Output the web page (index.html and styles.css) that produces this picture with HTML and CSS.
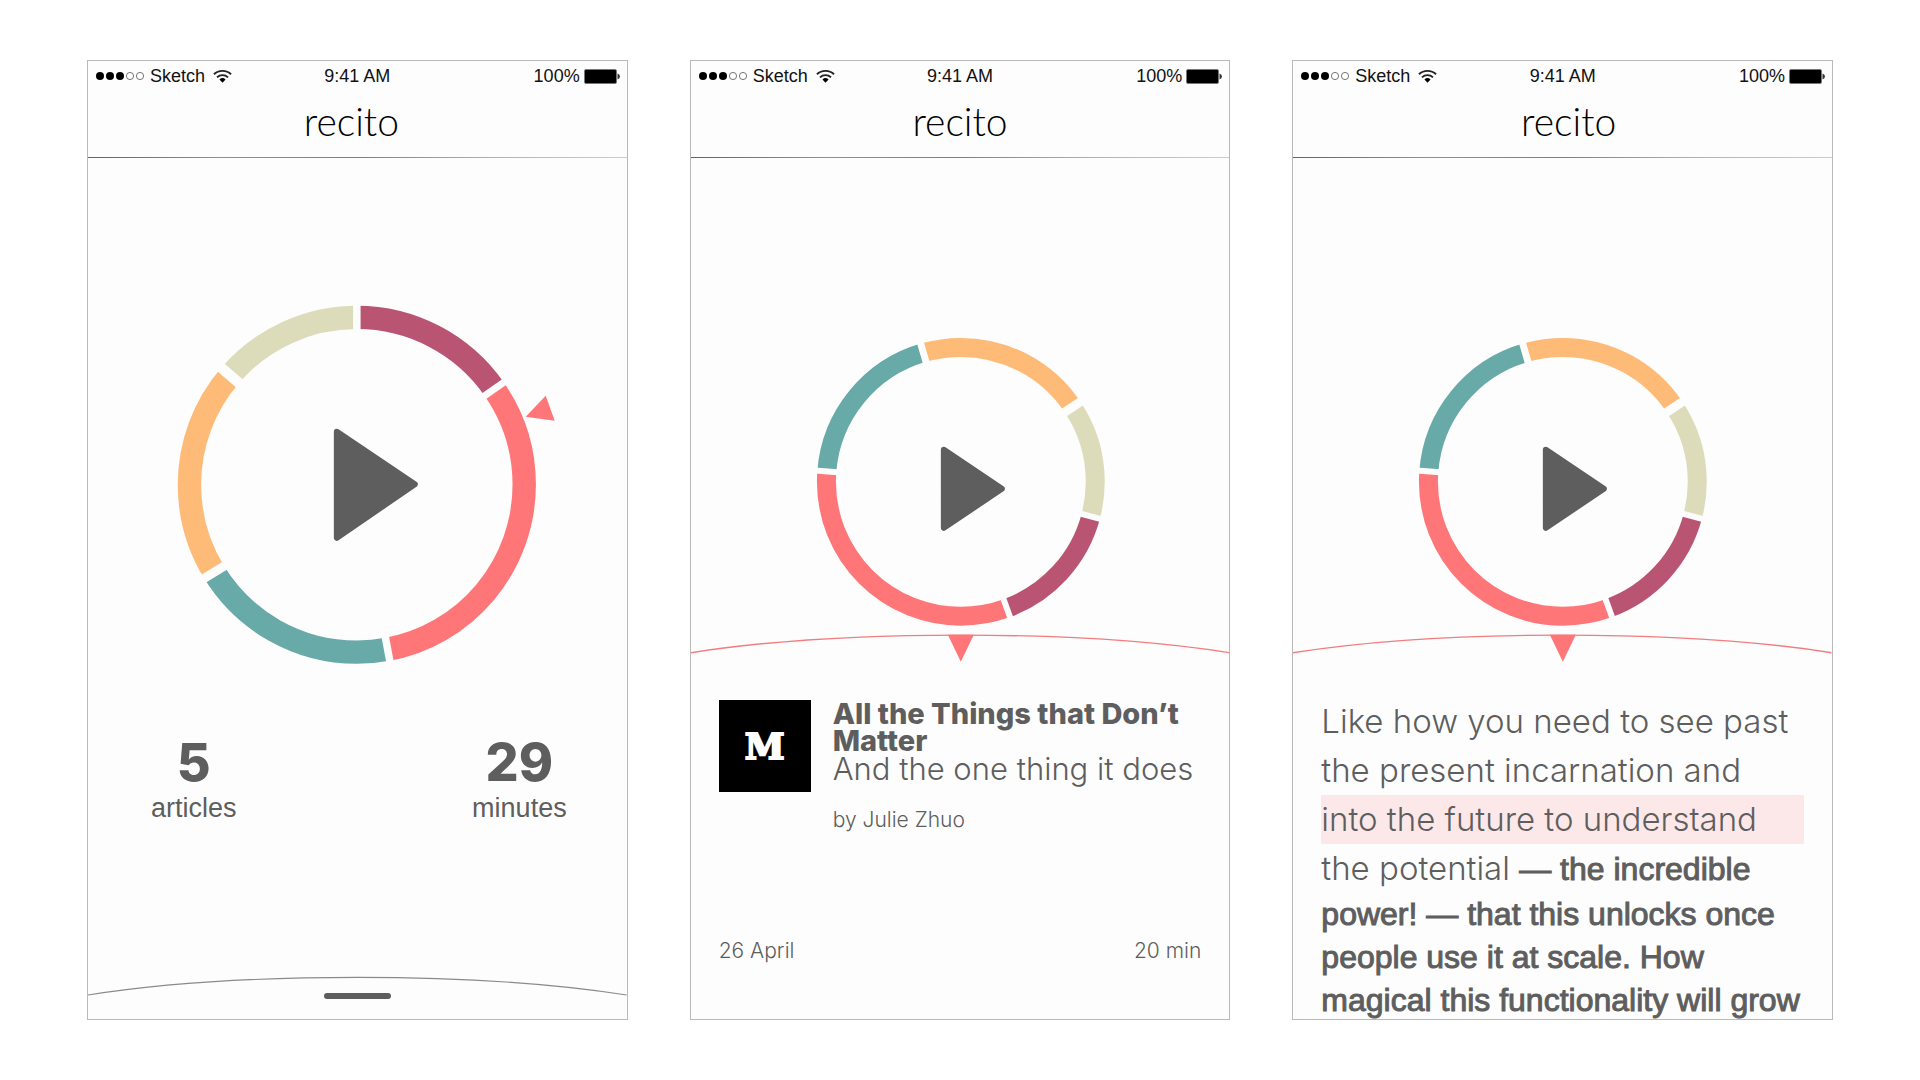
FILE: index.html
```html
<!DOCTYPE html>
<html lang="en">
<head>
<meta charset="utf-8">
<meta name="viewport" content="width=device-width, initial-scale=1">
<title>recito</title>
<link rel="stylesheet" href="styles.css">
</head>
<body>
<svg class="defs" aria-hidden="true">
  <symbol id="signal" viewBox="0 0 50 10">
    <g fill="#000"><circle cx="5" cy="5" r="4"/><circle cx="15" cy="5" r="4"/><circle cx="25" cy="5" r="4"/></g>
    <g fill="none" stroke="#555" stroke-width="0.8"><circle cx="35" cy="5" r="3.6"/><circle cx="45" cy="5" r="3.6"/></g>
  </symbol>
  <symbol id="wifi" viewBox="0 0 20 14">
    <g fill="none" stroke="#222" stroke-width="2"><path d="M1 5.2A13 13 0 0 1 19 5.2"/><path d="M4.2 8.4A8.4 8.4 0 0 1 15.8 8.4"/></g>
    <path d="M6.8 10.6A4.6 4.6 0 0 1 13.2 10.6L10 14Z" fill="#000"/>
  </symbol>
  <symbol id="battery" viewBox="0 0 36 15">
    <rect x="0.5" y="0.5" width="32" height="14" rx="1.5" fill="#000" stroke="#777"/>
    <path d="M33.5 4.5Q36 5.5 36 7.5T33.5 10.5Z" fill="#333"/>
  </symbol>
  <symbol id="dial" viewBox="0 0 539 505">
    <g fill="none" stroke-width="19" transform="rotate(-90 270 324)">
      <circle class="orange" cx="270" cy="324" r="134.5" pathLength="360" stroke-dasharray="72.4 287.6" stroke-dashoffset="16.2"/>
      <circle class="olive" cx="270" cy="324" r="134.5" pathLength="360" stroke-dasharray="48.7 311.3" stroke-dashoffset="-56.2"/>
      <circle class="plum" cx="270" cy="324" r="134.5" pathLength="360" stroke-dasharray="55.1 304.9" stroke-dashoffset="-104.9"/>
      <circle class="coral" cx="270" cy="324" r="134.5" pathLength="360" stroke-dasharray="114.4 245.6" stroke-dashoffset="-160"/>
      <circle class="teal" cx="270" cy="324" r="134.5" pathLength="360" stroke-dasharray="69.4 290.6" stroke-dashoffset="-274.4"/>
    </g>
    <g class="cut">
      <path stroke-width="7" d="M270 204V174" transform="rotate(343.8 270 324)"/>
      <path stroke-width="9" d="M270 204V174" transform="rotate(56.2 270 324)"/>
      <path stroke-width="6" d="M270 204V174" transform="rotate(104.9 270 324)"/>
      <path stroke-width="6" d="M270 204V174" transform="rotate(160 270 324)"/>
      <path stroke-width="6" d="M270 204V174" transform="rotate(274.4 270 324)"/>
    </g>
    <path class="play" d="M253 292L311 331L253 370Z"/>
    <path d="M0 495A386 62 0 0 1 539 495" fill="none" stroke="#f27c7e" stroke-width="1.4"/>
    <path d="M257 477H283L270 504Z" fill="#fe7678"/>
  </symbol>
</svg>

<main class="board">
  <section class="phone">
    <header class="top top-first">
      <div class="status">
        <span class="carrier"><svg class="signal"><use href="#signal"/></svg>Sketch<svg class="wifi"><use href="#wifi"/></svg></span>
        <span>9:41 AM</span>
        <span class="power">100%<svg class="battery"><use href="#battery"/></svg></span>
      </div>
      <h1 class="logo">recito</h1>
    </header>
    <button class="player" aria-label="Play all articles">
      <svg class="chart" viewBox="0 0 539 571">
        <g fill="none" stroke-width="23.4" transform="rotate(-90 269 327)">
          <circle class="plum" cx="269" cy="327" r="167.5" pathLength="360" stroke-dasharray="55.1 304.9"/>
          <circle class="coral" cx="269" cy="327" r="167.5" pathLength="360" stroke-dasharray="114.3 245.7" stroke-dashoffset="-55.1"/>
          <circle class="teal" cx="269" cy="327" r="167.5" pathLength="360" stroke-dasharray="69.1 290.9" stroke-dashoffset="-169.4"/>
          <circle class="orange" cx="269" cy="327" r="167.5" pathLength="360" stroke-dasharray="72.3 287.7" stroke-dashoffset="-238.5"/>
          <circle class="olive" cx="269" cy="327" r="167.5" pathLength="360" stroke-dasharray="49.2 310.8" stroke-dashoffset="-310.8"/>
        </g>
        <g class="cut">
          <path stroke-width="7.5" d="M269 177V142"/>
          <path stroke-width="7" d="M269 177V142" transform="rotate(55.1 269 327)"/>
          <path stroke-width="7.5" d="M269 177V142" transform="rotate(169.4 269 327)"/>
          <path stroke-width="9" d="M269 177V142" transform="rotate(238.5 269 327)"/>
          <path stroke-width="10.5" d="M269 177V142" transform="rotate(310.8 269 327)"/>
        </g>
        <path class="play" d="M249 274L327 326.5L249 380Z"/>
        <path d="M438 259L458 238L467 263Z" fill="#fe7678"/>
      </svg>
    </button>
    <dl class="stats">
      <div class="stat"><dd>5</dd><dt>articles</dt></div>
      <div class="stat"><dd>29</dd><dt>minutes</dt></div>
    </dl>
    <button class="drawer" aria-label="Open article list">
      <svg class="edge" viewBox="0 0 539 20"><path d="M0 19A386 62 0 0 1 539 19" fill="none" stroke="#8a8a8a" stroke-width="1.2"/></svg>
      <span class="grip"></span>
    </button>
  </section>

  <section class="phone">
    <header class="top">
      <div class="status">
        <span class="carrier"><svg class="signal"><use href="#signal"/></svg>Sketch<svg class="wifi"><use href="#wifi"/></svg></span>
        <span>9:41 AM</span>
        <span class="power">100%<svg class="battery"><use href="#battery"/></svg></span>
      </div>
      <h1 class="logo">recito</h1>
    </header>
    <button class="player" aria-label="Play article">
      <svg class="chart" viewBox="0 0 539 505"><use href="#dial"/></svg>
    </button>
    <article class="story">
      <div class="cover">M</div>
      <div class="summary">
        <h2 class="title">All the Things that Don’t Matter</h2>
        <p class="subtitle">And the one thing it does</p>
        <p class="byline">by Julie Zhuo</p>
      </div>
    </article>
    <footer class="meta"><span>26 April</span><span>20 min</span></footer>
  </section>

  <section class="phone">
    <header class="top top-last">
      <div class="status">
        <span class="carrier"><svg class="signal"><use href="#signal"/></svg>Sketch<svg class="wifi"><use href="#wifi"/></svg></span>
        <span>9:41 AM</span>
        <span class="power">100%<svg class="battery"><use href="#battery"/></svg></span>
      </div>
      <h1 class="logo">recito</h1>
    </header>
    <button class="player" aria-label="Play article">
      <svg class="chart" viewBox="0 0 539 505"><use href="#dial"/></svg>
    </button>
    <div class="reader">
      <p class="line">Like how you need to see past</p>
      <p class="line">the present incarnation and</p>
      <p class="line current">into the future to understand</p>
      <p class="line">the potential <strong>— the incredible</strong></p>
      <p class="next"><strong>power! — that this unlocks once<br>people use it at scale. How<br>magical this functionality will grow</strong></p>
    </div>
  </section>
</main>
</body>
</html>
```
FILE: styles.css
```css
* {
  box-sizing: border-box;
}

body {
  margin: 0;
  background: #fff;
  color: #5e5e5e;
  font-family: Inter, "Liberation Sans", sans-serif;
}

h1, h2, p, dl, dd {
  margin: 0;
}

button {
  display: block;
  width: 100%;
  padding: 0;
  border: 0;
  background: none;
  cursor: pointer;
}

.defs {
  display: none;
}

.board {
  display: grid;
  grid-template-columns: repeat(3, 1fr);
  gap: 62px;
  min-height: 100vh;
  padding: 60px 87px;
}

.phone {
  display: flex;
  flex-direction: column;
  overflow: hidden;
  border: 1px solid #b9b9b9;
  background: #fdfdfd;
}

/* header */

.top {
  height: 97px;
  border-bottom: 1px solid;
  border-image: linear-gradient(90deg, #a8405f, #dc6f72 25%, #4f9291 50%, #eaa658 75%, #d3d2a0) 1;
}

.status {
  display: grid;
  grid-template-columns: 1fr auto 1fr;
  align-items: center;
  height: 30px;
  padding: 0 7px;
  color: #111;
  font: 18px/20px "Liberation Sans", Arial, sans-serif;
}

.carrier, .power {
  display: flex;
  align-items: center;
}

.power {
  justify-content: flex-end;
  gap: 4px;
}

.signal {
  width: 50px;
  height: 10px;
  margin-right: 5px;
}

.wifi {
  width: 19px;
  height: 14px;
  margin-left: 8px;
}

.battery {
  width: 36px;
  height: 15px;
}

.logo {
  color: #000;
  font: 300 39px/44px Lato, sans-serif;
  padding-top: 8px;
  text-align: center;
}

.top-first .logo {
  padding-right: 12px;
}

.top-last .logo {
  padding-left: 12px;
}

/* player */

.chart {
  display: block;
  width: 100%;
}

.plum { stroke: #b95573; }
.coral { stroke: #fe7678; }
.teal { stroke: #67aaa8; }
.orange { stroke: #febb78; }
.olive { stroke: #dddcba; }

.cut {
  stroke: #fdfdfd;
}

.play {
  fill: #5e5e5e;
  stroke: #5e5e5e;
  stroke-width: 6;
  stroke-linejoin: round;
}

.stats {
  display: flex;
  justify-content: space-between;
  padding: 4px 60px 0 63px;
}

.stat {
  display: flex;
  flex-direction: column;
  align-items: center;
}

.stat dd {
  font-size: 52px;
  font-weight: 800;
  line-height: 60px;
}

.stat dt {
  font: 27px/30px "Liberation Sans", Arial, sans-serif;
}

.drawer {
  margin-top: auto;
  padding-bottom: 20px;
}

.edge {
  display: block;
  width: 100%;
}

.grip {
  display: block;
  width: 67px;
  height: 6px;
  margin: -3px auto 0;
  border-radius: 3px;
  background: #5e5e5e;
}

/* article */

.story {
  display: flex;
  gap: 22px;
  padding: 37px 28px 0;
}

.summary {
  white-space: nowrap;
}

.cover {
  display: grid;
  flex: none;
  place-items: center;
  width: 92px;
  height: 92px;
  background: #000;
  color: #fff;
  font: 700 36px/40px "DejaVu Serif", serif;
  -webkit-text-stroke: 2px #fff;
}

.title {
  font-size: 29px;
  font-weight: 800;
  line-height: 27px;
  white-space: normal;
}

.subtitle {
  font-size: 31px;
  font-weight: 300;
  line-height: 30px;
}

.byline {
  margin-top: 24px;
  font-size: 21px;
  font-weight: 300;
  line-height: 24px;
}

.meta {
  display: flex;
  justify-content: space-between;
  margin-top: auto;
  padding: 0 28px 56px;
  font-size: 21px;
  font-weight: 300;
  line-height: 24px;
}

/* reader */

.reader {
  contain: size;
  flex: 1;
  min-height: 300px;
  padding: 34px 28px 0;
  font-size: 33px;
  font-weight: 300;
  white-space: nowrap;
}

.line {
  height: 49px;
  line-height: 48px;
}

.current {
  background: #fde8e9;
}

.reader strong {
  font: 32px/43px "Liberation Sans", Arial, sans-serif;
  -webkit-text-stroke: 1px #5e5e5e;
}

.next {
  font: 32px/43px "Liberation Sans", Arial, sans-serif;
}
```
